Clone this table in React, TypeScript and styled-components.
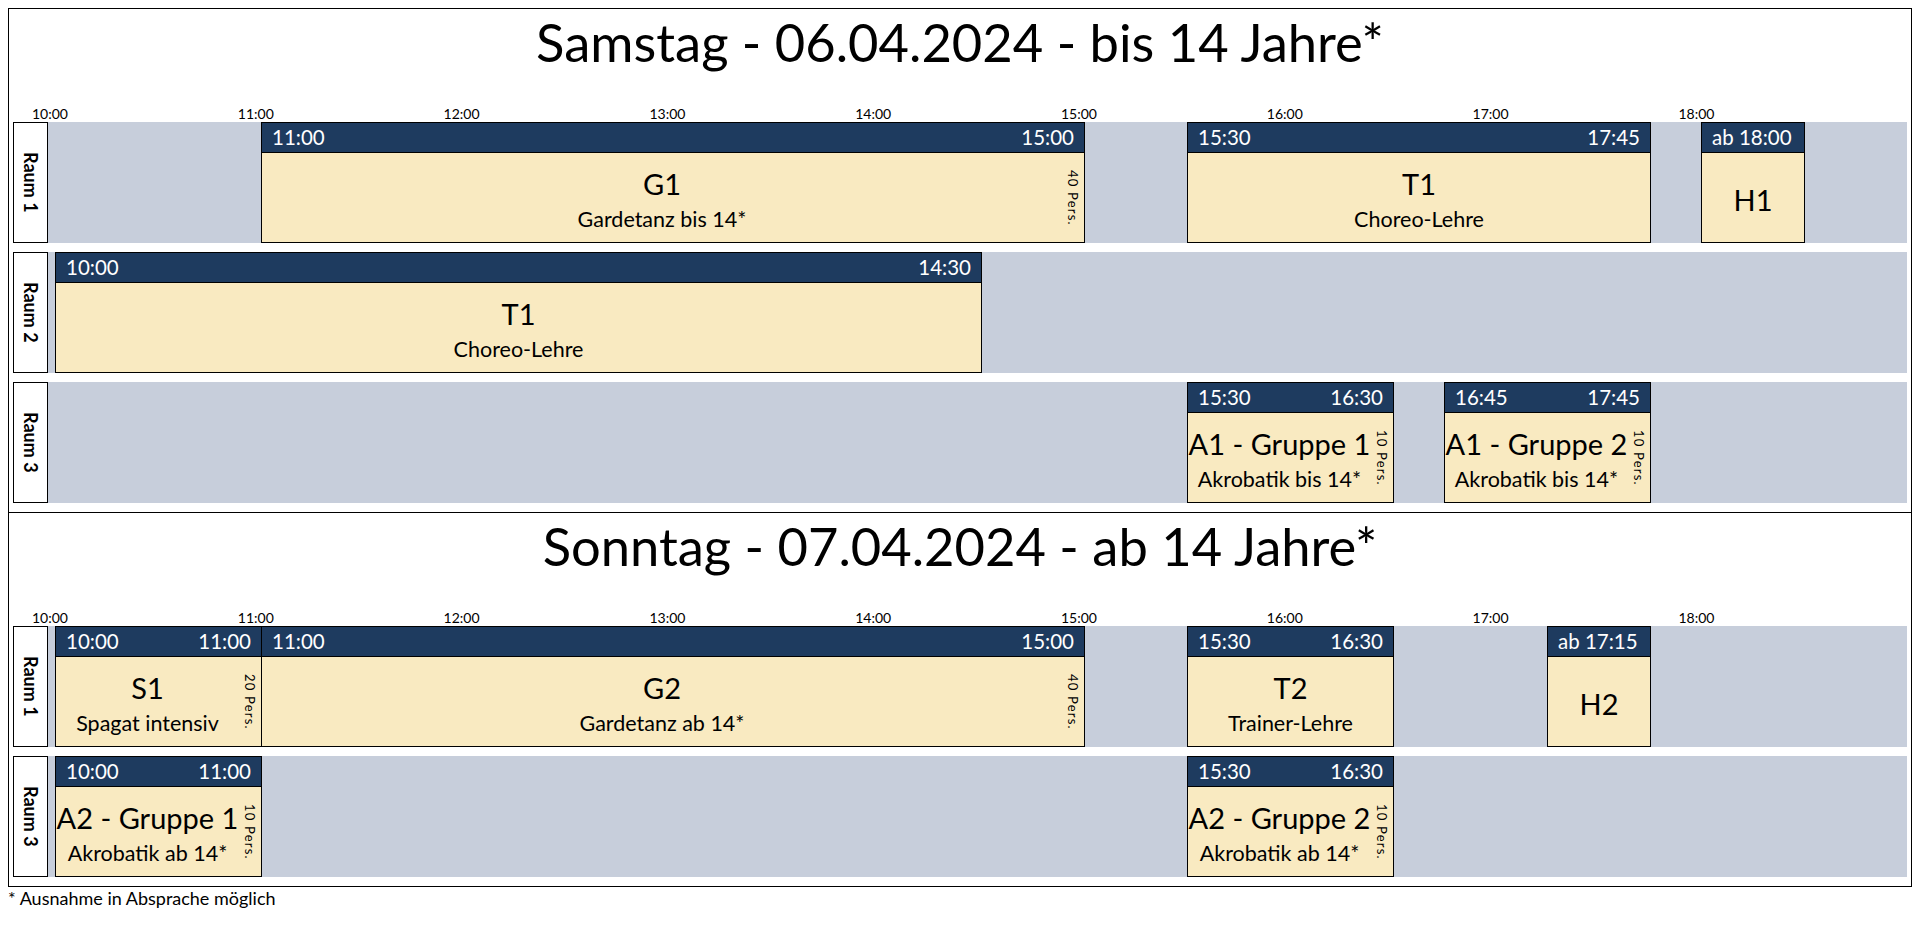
import styled, { createGlobalStyle } from "styled-components";

const GlobalStyle = createGlobalStyle`
    body {
        margin: 8px;
        background: #ffffff;
        color: #000000;
        font-family: Lato, "Open Sans", sans-serif;
    }
`;

// timeline scale: 10:00 sits 7px into the track, one hour = 205.8px
const HOUR = 205.8;
const ORIGIN = 7;
const HOURS = [10, 11, 12, 13, 14, 15, 16, 17, 18];

type Slot = {
    start: number;
    end: number;
    from: string;
    to?: string;
    name: string;
    sub?: string;
    pers?: string;
};

type Room = { label: string; slots: Slot[] };

type Day = { title: string; rooms: Room[] };

const days: Day[] = [
    {
        title: "Samstag - 06.04.2024 - bis 14 Jahre*",
        rooms: [
            {
                label: "Raum 1",
                slots: [
                    {start: 11, end: 15, from: "11:00", to: "15:00", name: "G1", sub: "Gardetanz bis 14*", pers: "40 Pers."},
                    {start: 15.5, end: 17.75, from: "15:30", to: "17:45", name: "T1", sub: "Choreo-Lehre"},
                    {start: 18, end: 18.5, from: "ab 18:00", name: "H1"},
                ],
            },
            {
                label: "Raum 2",
                slots: [
                    {start: 10, end: 14.5, from: "10:00", to: "14:30", name: "T1", sub: "Choreo-Lehre"},
                ],
            },
            {
                label: "Raum 3",
                slots: [
                    {start: 15.5, end: 16.5, from: "15:30", to: "16:30", name: "A1 - Gruppe 1", sub: "Akrobatik bis 14*", pers: "10 Pers."},
                    {start: 16.75, end: 17.75, from: "16:45", to: "17:45", name: "A1 - Gruppe 2", sub: "Akrobatik bis 14*", pers: "10 Pers."},
                ],
            },
        ],
    },
    {
        title: "Sonntag - 07.04.2024 - ab 14 Jahre*",
        rooms: [
            {
                label: "Raum 1",
                slots: [
                    {start: 10, end: 11, from: "10:00", to: "11:00", name: "S1", sub: "Spagat intensiv", pers: "20 Pers."},
                    {start: 11, end: 15, from: "11:00", to: "15:00", name: "G2", sub: "Gardetanz ab 14*", pers: "40 Pers."},
                    {start: 15.5, end: 16.5, from: "15:30", to: "16:30", name: "T2", sub: "Trainer-Lehre"},
                    {start: 17.25, end: 17.75, from: "ab 17:15", name: "H2"},
                ],
            },
            {
                label: "Raum 3",
                slots: [
                    {start: 10, end: 11, from: "10:00", to: "11:00", name: "A2 - Gruppe 1", sub: "Akrobatik ab 14*", pers: "10 Pers."},
                    {start: 15.5, end: 16.5, from: "15:30", to: "16:30", name: "A2 - Gruppe 2", sub: "Akrobatik ab 14*", pers: "10 Pers."},
                ],
            },
        ],
    },
];

const Frame = styled.div`
    border: 1px solid #000;
`;

const Section = styled.section<{ $divider?: boolean }>`
    padding: 3px 4px 9px;
    border-top: ${p => p.$divider ? "1px solid #000" : "none"};
`;

const DayTitle = styled.h1`
    margin: 0 0 34px;
    font-size: 52.5px;
    line-height: 60px;
    font-weight: 400;
    text-align: center;
`;

const Ticks = styled.div`
    position: relative;
    height: 16px;
    margin-left: 35px;
`;

const Tick = styled.span`
    position: absolute;
    top: 0;
    transform: translateX(-50%);
    font-size: 14px;
    line-height: 16px;
`;

const Rows = styled.div`
    display: flex;
    flex-direction: column;
    gap: 9px;
`;

const Row = styled.div`
    display: flex;
    height: 121px;
`;

const RoomLabel = styled.div`
    width: 35px;
    flex: none;
    box-sizing: border-box;
    border: 1px solid #000;
    background: #fff;
    display: flex;
    align-items: center;
    justify-content: center;
`;

const RoomName = styled.span`
    writing-mode: vertical-rl;
    font-size: 18px;
    font-weight: 700;
`;

const Track = styled.div`
    position: relative;
    flex: 1;
    background: #c7cedb;
`;

const Event = styled.div`
    position: absolute;
    top: 0;
    bottom: 0;
    box-sizing: border-box;
    border: 1px solid #000;
    display: flex;
    flex-direction: column;
`;

const EventHead = styled.div`
    flex: none;
    height: 29px;
    padding: 0 10px;
    border-bottom: 1px solid #000;
    background: #1e3b5f;
    color: #fff;
    display: flex;
    justify-content: space-between;
    align-items: center;
    font-size: 20.5px;
    line-height: 29px;
    white-space: nowrap;
`;

const EventBody = styled.div`
    flex: 1;
    display: flex;
    background: #f9eac1;
`;

const EventText = styled.div`
    flex: 1;
    min-width: 0;
    padding-top: 4px;
    display: flex;
    flex-direction: column;
    align-items: center;
    justify-content: center;
    white-space: nowrap;
`;

const EventName = styled.div`
    font-size: 29px;
    line-height: 34px;
`;

const EventSub = styled.div`
    margin-top: 5px;
    font-size: 21.5px;
    line-height: 26px;
`;

const Capacity = styled.div`
    width: 22px;
    flex: none;
    display: flex;
    align-items: center;
    justify-content: center;
`;

const CapacityText = styled.span`
    writing-mode: vertical-rl;
    font-size: 13px;
    letter-spacing: 1.2px;
    white-space: nowrap;
`;

const FootNote = styled.p`
    margin: 1px 0 0;
    font-size: 18px;
    line-height: 20px;
`;

function SlotBox({slot}: { slot: Slot }) {
    const left = Math.round(ORIGIN + (slot.start - 10) * HOUR);
    const right = Math.round(ORIGIN + (slot.end - 10) * HOUR);
    return <Event style={{left, width: right - left + 1}}>
        <EventHead>
            <span>{slot.from}</span>
            {slot.to && <span>{slot.to}</span>}
        </EventHead>
        <EventBody>
            <EventText>
                <EventName>{slot.name}</EventName>
                {slot.sub && <EventSub>{slot.sub}</EventSub>}
            </EventText>
            {slot.pers && <Capacity><CapacityText>{slot.pers}</CapacityText></Capacity>}
        </EventBody>
    </Event>
}

export default function App() {
    return <>
        <GlobalStyle/>
        <Frame>
            {days.map((day, i) =>
                <Section key={day.title} $divider={i > 0}>
                    <DayTitle>{day.title}</DayTitle>
                    <Ticks>
                        {HOURS.map(h =>
                            <Tick key={h} style={{left: ORIGIN + (h - 10) * HOUR - 5}}>{h}:00</Tick>
                        )}
                    </Ticks>
                    <Rows>
                        {day.rooms.map(room =>
                            <Row key={room.label}>
                                <RoomLabel><RoomName>{room.label}</RoomName></RoomLabel>
                                <Track>
                                    {room.slots.map(slot => <SlotBox key={slot.from + slot.name} slot={slot}/>)}
                                </Track>
                            </Row>
                        )}
                    </Rows>
                </Section>
            )}
        </Frame>
        <FootNote>* Ausnahme in Absprache möglich</FootNote>
    </>
}
